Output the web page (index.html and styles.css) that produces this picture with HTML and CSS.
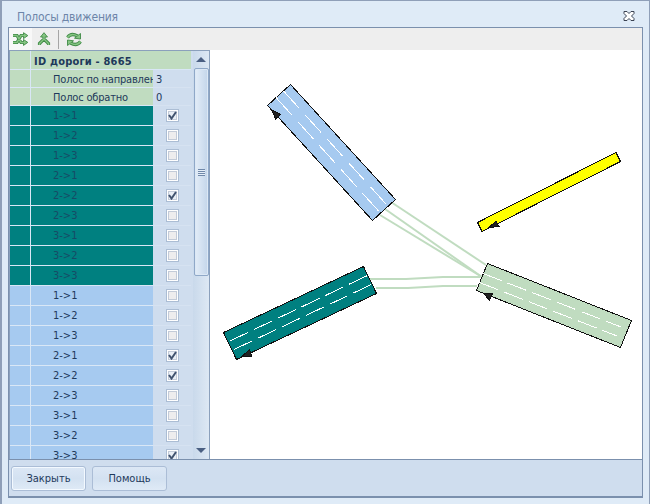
FILE: index.html
```html
<!DOCTYPE html>
<html lang="ru">
<head>
    <meta charset="UTF-8">
    <title>Полосы движения</title>
    <link rel="stylesheet" href="styles.css">
</head>
<body>
    <div class="window">
        <div class="titlebar">
            <span class="title">Полосы движения</span>
            <svg class="close" width="12" height="10" viewBox="0 0 12 10">
                <path d="M1 .5h3L6 2.500 8 .5h3v2L8.500 5 11 7.500v2H8L6 7.500 4 9.500H1v-2L3.500 5 1 2.500z"/>
            </svg>
        </div>
        <div class="client">
            <div class="toolbar">
                <button class="tool active" title="Соединения">
                    <svg width="17" height="14" viewBox="0 0 17 14">
                        <path class="edge" d="M1 3.500h4l4 7h4M1 10.500h4l4-7h4"/>
                        <path class="tip" d="M11.500 .7L15.800 3.600 11.500 6.600zM11.500 7.500L15.800 10.400 11.500 13.400z"/>
                        <path class="fill" d="M1 3.500h4l4 7h4M1 10.500h4l4-7h4"/>
                    </svg>
                </button>
                <button class="tool" title="Полосы">
                    <svg width="14" height="14" viewBox="0 0 14 14">
                        <path class="edge" d="M7 4v3M2.500 13v-1.500L7 7l4.500 4.500V13"/>
                        <path class="tip" d="M7 .7L10.500 5h-7z"/>
                        <path class="fill" d="M7 4v3M2.500 13v-1.500L7 7l4.500 4.500V13"/>
                    </svg>
                </button>
                <span class="separator"></span>
                <button class="tool" title="Обновить">
                    <svg width="18" height="15" viewBox="0 0 18 15">
                        <path class="edge" d="M2.500 5.500C5 2 9 2 12.500 4M15.500 9.500C13 13 9 13 5.500 11"/>
                        <path class="tip" d="M15.500 1.500v5.500l-6-.8zM2.500 13.500V8l6 .8z"/>
                        <path class="fill" d="M2.500 5.500C5 2 9 2 12.500 4M15.500 9.500C13 13 9 13 5.500 11"/>
                    </svg>
                </button>
            </div>

            <div class="main">
                <div class="grid">
                    <div class="rows" id="rows">
                        <div class="row head">
                            <span class="mark"></span>
                            <span class="name">ID дороги - 8665</span>
                        </div>
                        <div class="row info">
                            <span class="mark"></span>
                            <span class="name">Полос по направлен</span>
                            <span class="value">3</span>
                        </div>
                        <div class="row info">
                            <span class="mark"></span>
                            <span class="name">Полос обратно</span>
                            <span class="value">0</span>
                        </div>
                    </div>
                    <div class="scrollbar">
                        <span class="arrow up"></span>
                        <div class="thumb"><span class="grip"></span></div>
                        <span class="arrow down"></span>
                    </div>
                </div>

                <svg class="map" width="432" height="409" viewBox="210 50 432 409">
                    <g class="links">
                        <path d="M391 202L486 265"/>
                        <path d="M385 209L482 277"/>
                        <path d="M380 215L482 277"/>
                        <path d="M370 279L406 279 443 277 480 277"/>
                        <path d="M376 288L408 288 443 286 477 286"/>
                    </g>
                    <g class="road blue">
                        <path d="M290.500 84.500L395.500 199.500 372.500 220.500 267.500 105.500z"/>
                        <path class="lane" d="M283.500 91L386 204"/>
                        <path class="lane" d="M276 97.500L379 211.500"/>
                        <path class="head" d="M272 110L280.500 114.500 275.500 119z"/>
                    </g>
                    <g class="road teal">
                        <path d="M363.500 266.500L376.500 293.500 236.500 359.500 223.500 332.500z"/>
                        <path class="lane" d="M230 341L368.500 275"/>
                        <path class="lane" d="M234 349.500L372.500 284"/>
                        <path class="head" d="M241 357L249.500 350 252 356z"/>
                    </g>
                    <g class="road green">
                        <path d="M487.500 263.500L631.500 320.500 620.500 347.500 476.500 290.500z"/>
                        <path class="lane" d="M483 273.500L621 327"/>
                        <path class="lane" d="M479.500 282.500L617 336"/>
                        <path class="head" d="M483 293L492.500 293.500 489.500 300z"/>
                    </g>
                    <g class="road yellow">
                        <path d="M616 152.500L620.500 161.500 482 231.500 477.500 222.500z"/>
                        <path class="head" d="M489 227.500L496 221 499 226.500z"/>
                    </g>
                </svg>
            </div>

            <div class="footer">
                <button class="btn default">Закрыть</button>
                <button class="btn">Помощь</button>
            </div>
        </div>
    </div>

    <script>
        const lanes = ['1->1', '1->2', '1->3', '2->1', '2->2', '2->3', '3->1', '3->2', '3->3'];
        const groups = [
            { color: 'teal', checked: ['1->1', '2->2'] },
            { color: 'blue', checked: ['2->1', '2->2', '3->3'] }
        ];
        const tick = '<svg width="9" height="9" viewBox="0 0 9 9"><path d="M1 4l2.500 3.500L8 1"/></svg>';
        const rows = document.getElementById('rows');

        groups.forEach(group => {
            lanes.forEach(lane => {
                const row = document.createElement('div');
                const on = group.checked.includes(lane);
                row.className = 'row lane-row ' + group.color;
                row.innerHTML = `
                    <span class="mark"></span>
                    <span class="name">${lane.replace('>', '&gt;')}</span>
                    <span class="value"><i class="check${on ? ' on' : ''}">${on ? tick : ''}</i></span>
                `;
                rows.appendChild(row);
            });
        });
    </script>
</body>
</html>
```

FILE: styles.css
```css
* {
    box-sizing: border-box;
}

body {
    margin: 0;
    height: 504px;
    overflow: hidden;
    background: #8f9baf;
    font-family: "DejaVu Sans Condensed", "DejaVu Sans", sans-serif;
    font-size: 11px;
    color: #1e395b;
}

.window {
    width: 650px;
    height: 504px;
    padding: 0 6px 6px 6px;
    background: #dfebf7;
    border: solid #8f9fb8;
    border-width: 1px 1px 0 2px;
}

.titlebar {
    display: flex;
    align-items: center;
    justify-content: space-between;
    height: 26px;
    padding: 5px 8px 0 9px;
}

.title {
    font-size: 12px;
    letter-spacing: -0.2px;
    color: #6d85a9;
}

.close {
    position: relative;
    top: -1px;
}

.close path {
    fill: #fff;
    stroke: #3b4353;
}

.client {
    display: flex;
    flex-direction: column;
    width: 635px;
    height: 471px;
    border: 1px solid #7b90ad;
    border-bottom-width: 2px;
    background: #fff;
}

.toolbar {
    display: flex;
    align-items: center;
    flex: none;
    height: 22px;
    background: #eee;
}

.tool {
    display: flex;
    align-items: center;
    justify-content: center;
    width: 23px;
    height: 22px;
    padding: 0;
    border: 0;
    background: none;
}

.tool.active {
    background: #f8f8f8;
}

.tool path {
    fill: none;
}

.tool .edge {
    stroke: #3f8a46;
    stroke-width: 3.2;
}

.tool .fill {
    stroke: #86c583;
    stroke-width: 1.4;
}

.tool .tip {
    fill: #86c583;
    stroke: #3f8a46;
    stroke-width: 0.9;
}

.separator {
    width: 1px;
    height: 19px;
    margin: 0 3px;
    background: #a5a5a5;
}

.main {
    display: flex;
    height: 409px;
}

.grid {
    display: flex;
    width: 201px;
    height: 409px;
    border: solid #8ba0bc;
    border-width: 1px 1px 0 1px;
    background: #cfddee;
}

.rows {
    width: 183px;
    height: 408px;
    overflow: hidden;
}

.row {
    display: flex;
    height: 20px;
}

.mark,
.name {
    border-bottom: 1px solid #d9e7f6;
}

.mark {
    flex: none;
    width: 21px;
    border-right: 1px solid #d9e7f6;
}

.name {
    flex: none;
    width: 122px;
    padding-left: 22px;
    line-height: 20px;
    white-space: nowrap;
    overflow: hidden;
}

.value {
    display: flex;
    align-items: center;
    justify-content: center;
    width: 38px;
    border-bottom: 1px solid #d6e2f1;
}

.head .mark,
.head .name,
.info .mark,
.info .name {
    background: #c0dcc0;
}

.row.head {
    height: 19px;
}

.head .name {
    width: 160px;
    padding-left: 3px;
    line-height: 21px;
    font-weight: bold;
    letter-spacing: 0.2px;
}

.row.info {
    height: 18px;
}

.info .name {
    letter-spacing: -0.18px;
}

.info .value {
    justify-content: flex-start;
    padding: 2px 0 0 3px;
}

.lane-row .name {
    line-height: 19px;
}

.lane-row.teal .mark,
.lane-row.teal .name {
    background: #008080;
}

.lane-row.teal .name {
    color: #174b66;
}

.lane-row.blue .mark,
.lane-row.blue .name {
    background: #a6caf0;
}

.check {
    display: flex;
    align-items: center;
    justify-content: center;
    width: 13px;
    height: 13px;
    border: 1px solid #abbdd4;
    background: #eeedee;
    box-shadow: inset 0 0 0 1px #fff, inset 0 0 0 2px #c3cbd8;
}

.check.on {
    background: #e9eff6;
}

.check path {
    fill: none;
    stroke: #41536f;
    stroke-width: 2;
}

.scrollbar {
    display: flex;
    flex-direction: column;
    align-items: center;
    width: 16px;
    height: 408px;
    background: linear-gradient(to right, #c9d9eb, #dde8f4);
}

.arrow {
    width: 0;
    height: 0;
    border: solid transparent;
    border-width: 0 5px;
}

.arrow.up {
    margin: 6px 0 6px;
    border-bottom: 5px solid #4a5f82;
}

.arrow.down {
    margin: auto 0 6px;
    border-top: 5px solid #4a5f82;
}

.thumb {
    display: flex;
    align-items: center;
    justify-content: center;
    width: 15px;
    height: 208px;
    border: 1px solid #8fa8c8;
    border-radius: 2px;
    background: linear-gradient(to right, #e3edf8, #c3d5ea);
    box-shadow: inset 0 0 0 1px #dce8f5;
}

.grip {
    width: 7px;
    height: 7px;
    background: repeating-linear-gradient(#6f88aa 0 1px, #e5eef8 1px 2px);
}

.map {
    display: block;
    flex: none;
    background: #fff;
}

.links path {
    fill: none;
    stroke: #c0dcc0;
    stroke-width: 2;
}

.road path {
    stroke: #111;
    stroke-width: 1;
    shape-rendering: crispEdges;
}

.road .lane {
    fill: none;
    stroke: #fff;
    stroke-dasharray: 20 6.4;
}

.road.blue .lane {
    stroke-dasharray: 23.500 8.800;
}

.road .head {
    fill: #222;
}

.road.blue {
    fill: #a6caf0;
}

.road.teal {
    fill: #008080;
}

.road.green {
    fill: #c0dcc0;
}

.road.yellow {
    fill: #ff0;
}

.footer {
    display: flex;
    flex: 1;
    gap: 6px;
    padding: 6px 0 0 2px;
    border-top: 1px solid #7b90ad;
    background: #cfddee;
}

.btn {
    width: 75px;
    height: 25px;
    padding: 0;
    border: 1px solid #abbdd6;
    border-radius: 3px;
    background: linear-gradient(#dce7f5, #d3e1f1 50%, #dfeaf6);
    font: inherit;
    color: #1e395b;
}

.btn.default {
    box-shadow: inset 0 0 0 1px #f3f9ff;
}
```
